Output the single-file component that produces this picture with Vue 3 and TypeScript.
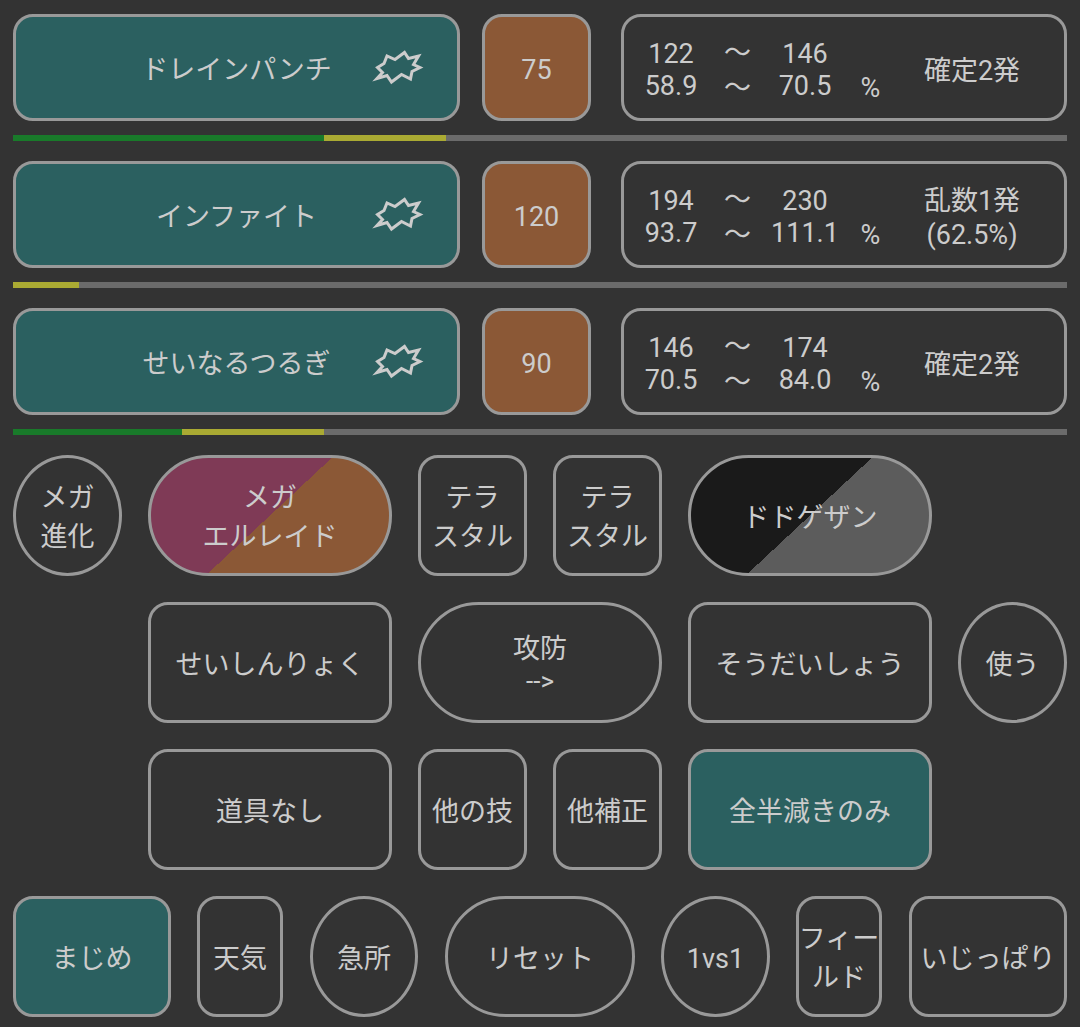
<script setup lang="ts">
interface Move { name: string; power: string; a: string; b: string; c: string; d: string; v: string[]; g: number; y: number }
const moves: Move[] = [
  { name: 'ドレインパンチ', power: '75', a: '122', b: '146', c: '58.9', d: '70.5', v: ['確定2発'], g: 29.5, y: 11.6 },
  { name: 'インファイト', power: '120', a: '194', b: '230', c: '93.7', d: '111.1', v: ['乱数1発', '(62.5%)'], g: 0, y: 6.3 },
  { name: 'せいなるつるぎ', power: '90', a: '146', b: '174', c: '70.5', d: '84.0', v: ['確定2発'], g: 16, y: 13.5 },
]
</script>

<template>
  <main class="page">
    <section v-for="m in moves" :key="m.name" class="move">
      <div class="cells">
        <div class="btn teal name">
          <span class="mname">{{ m.name }}</span>
          <svg class="burst" viewBox="0 0 58 40" width="58" height="40" aria-hidden="true">
            <path d="M7.5 19.5 L14 15.5 L17 8 L25 11.5 L34.5 4.5 L38.5 10.5 L48.5 8 L43.5 16.5 L50 19.5 L42 23.5 L40.5 31 L31.5 26.5 L21.5 34 L17 27.5 L7 30.5 L12.5 24.5 Z" />
          </svg>
        </div>
        <div class="btn brown power">{{ m.power }}</div>
        <div class="btn dmg">
          <div class="nums">
            <span>{{ m.a }}</span><span class="t up">〜</span><span>{{ m.b }}</span><span></span>
            <span>{{ m.c }}</span><span class="t">〜</span><span>{{ m.d }}</span><span class="pc">%</span>
          </div>
          <div class="verdict"><span v-for="l in m.v" :key="l">{{ l }}</span></div>
        </div>
      </div>
      <div class="bar">
        <i class="g" :style="{ width: m.g + '%' }"></i>
        <i class="y" :style="{ width: m.y + '%' }"></i>
      </div>
    </section>

    <div class="grid">
      <div class="btn round">メガ<br />進化</div>
      <div class="btn pill s2 mega">メガ<br />エルレイド</div>
      <div class="btn">テラ<br />スタル</div>
      <div class="btn">テラ<br />スタル</div>
      <div class="btn pill s2 dodo">ドドゲザン</div>
      <div class="blank"></div>

      <div class="blank"></div>
      <div class="btn s2">せいしんりょく</div>
      <div class="btn pill s2 stack"><span class="l32">攻防</span><span class="arrow">--&gt;</span></div>
      <div class="btn s2">そうだいしょう</div>
      <div class="btn round">使う</div>

      <div class="blank"></div>
      <div class="btn s2">道具なし</div>
      <div class="btn">他の技</div>
      <div class="btn">他補正</div>
      <div class="btn s2 teal">全半減きのみ</div>
    </div>

    <div class="last">
      <div class="btn teal w158">まじめ</div>
      <div class="btn w86 g26">天気</div>
      <div class="btn round w108 g27">急所</div>
      <div class="btn pill w190 g27">リセット</div>
      <div class="btn round w109 g26">1vs1</div>
      <div class="btn w86 g26">フィー<br />ルド</div>
      <div class="btn w158 g27">いじっぱり</div>
    </div>
  </main>
</template>

<style scoped>
.page {
  box-sizing: border-box;
  width: 1080px;
  height: 1027px;
  padding: 14px 13px 0;
  background: #333;
  color: #ccc;
  font-family: Roboto, "Noto Sans CJK JP", sans-serif;
  font-size: 27px;
  line-height: 39px;
  overflow: hidden;
}
.move { height: 147px; }
.cells {
  display: flex;
  height: 107px;
}
.btn {
  box-sizing: border-box;
  border: 3px solid #999;
  border-radius: 20px;
  display: flex;
  align-items: center;
  justify-content: center;
  text-align: center;
  white-space: nowrap;
  min-width: 0;
  padding-top: 5px;
}
.teal { background: #2b6060; }
.brown { background: #8b5836; }
.name { position: relative; width: 447px; }
.power { width: 109px; margin-left: 22px; }
.cells .dmg {
  width: 446px;
  margin-left: 30px;
  justify-content: flex-start;
  padding-top: 4px;
  padding-left: 13px;
}
.burst {
  position: absolute;
  left: 354px;
  top: 31px;
  fill: none;
  stroke: #ccc;
  stroke-width: 3;
  stroke-miterlimit: 10;
}
.nums {
  display: grid;
  grid-template-columns: 68px 65px 70px 65px;
  grid-auto-rows: 32px;
  line-height: 32px;
  width: 268px;
}
.t { position: relative; top: 2px; }
.t.up { top: -1px; }
.pc { position: relative; left: -2px; top: 2px; }
.verdict {
  display: flex;
  flex-direction: column;
  line-height: 34px;
  width: 110px;
  margin-left: 12px;
  margin-top: 3px;
  align-items: center;
}
.bar {
  display: flex;
  height: 6px;
  margin-top: 14px;
  background: #6b6b6b;
}
.bar i { display: block; height: 100%; }
.bar .g { background: #197a2a; }
.bar .y { background: #aaaa33; }
.grid {
  display: grid;
  grid-template-columns: repeat(8, 109px);
  grid-auto-rows: 121px;
  column-gap: 26px;
  row-gap: 26px;
}
.s2 { grid-column: span 2; }
.blank { min-width: 0; }
.round { border-radius: 50%; }
.pill { border-radius: 61px; }
.stack { flex-direction: column; }
.l32 { line-height: 32px; }
.arrow { font-size: 26px; line-height: 33px; }
.mega { background: linear-gradient(137deg, #7f3a56 50%, #8b5836 50%); }
.dodo { background: linear-gradient(137deg, #1a1a1a 50%, #5c5c5c 50%); }
.last {
  display: flex;
  height: 121px;
  margin-top: 26px;
}
.g26 { margin-left: 26px; }
.g27 { margin-left: 27px; }
.w158 { width: 158px; }
.w86 { width: 86px; }
.w108 { width: 108px; }
.w109 { width: 109px; }
.w190 { width: 190px; }
</style>
